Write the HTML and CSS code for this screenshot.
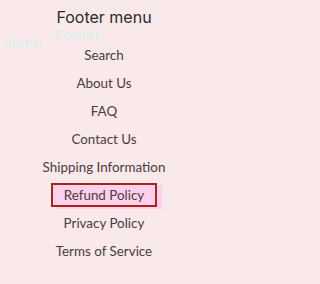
FILE: index.html
```html
<!DOCTYPE html>
<html>
<head>
<meta charset="utf-8">
<link rel="stylesheet" href="styles.css">
</head>
<body>
<div class="footer">
  <h2 class="title">Footer menu</h2>
  <span class="ghost ghost-footer" aria-hidden="true">Footer</span>
  <span class="ghost ghost-menu" aria-hidden="true">menu</span>
  <ul class="menu">
    <li><a href="#">Search</a></li>
    <li><a href="#">About Us</a></li>
    <li><a href="#">FAQ</a></li>
    <li><a href="#">Contact Us</a></li>
    <li><a href="#">Shipping Information</a></li>
    <li class="selected"><a href="#">Refund Policy</a></li>
    <li><a href="#">Privacy Policy</a></li>
    <li><a href="#">Terms of Service</a></li>
  </ul>
</div>
</body>
</html>
```
FILE: styles.css
```css
html, body {
  margin: 0;
  padding: 0;
  background: #f9e9ea;
}
body {
  width: 208px;
  height: 284px;
  overflow: hidden;
}
.footer {
  position: relative;
  display: flex;
  flex-direction: column;
  align-items: center;
  padding-top: 7px;
}
.title {
  margin: 0;
  font-family: "Inter", "Noto Sans", sans-serif;
  font-weight: 400;
  font-size: 16px;
  line-height: 20px;
  color: #2f2a2a;
}
.ghost {
  position: absolute;
  font-family: "Inter", sans-serif;
  font-size: 13px;
  line-height: 13px;
  color: #d4f4ef;
  letter-spacing: 1px;
}
.ghost-footer { left: 55px; top: 29px; }
.ghost-menu { left: 4px; top: 37px; }
.menu {
  list-style: none;
  margin: 14px 0 0;
  padding: 0;
  display: flex;
  flex-direction: column;
  align-items: center;
}
.menu li {
  height: 28px;
  display: flex;
  align-items: center;
}
.menu a {
  font-family: "Lato", "Open Sans", sans-serif;
  font-size: 13.4px;
  color: #4a3c3c;
  text-decoration: none;
  padding: 0 14px;
}
.menu li.selected a {
  background: #ffd0ec;
  border: 2px solid #a3281c;
  line-height: 20px;
  padding: 0 11px;
  box-shadow: 5px 2px 0 #ffd0ec;
}
```
